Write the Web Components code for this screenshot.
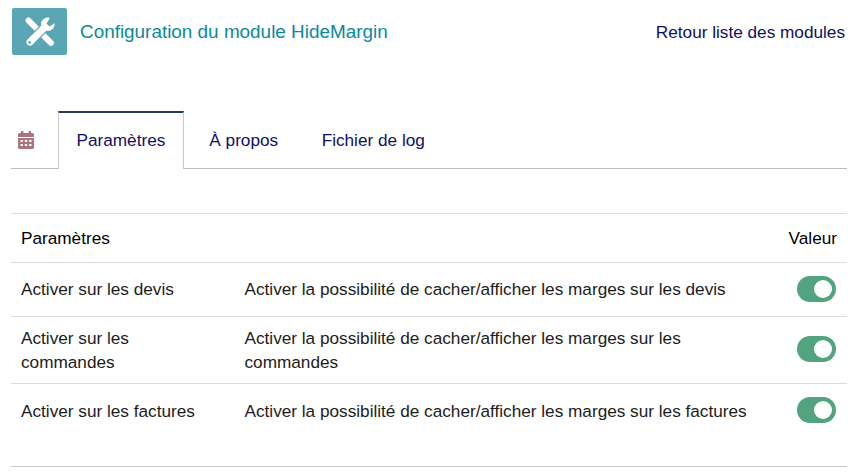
<!DOCTYPE html>
<html lang="fr">
<head>
<meta charset="utf-8">
<title>HideMargin</title>
<style>
  html, body { margin:0; padding:0; background:#fff; }
  body { font-family:"Liberation Sans", Arial, sans-serif; font-size:17.2px; color:#000; }
</style>
</head>
<body>
<module-page>
  <module-header slot="header" title-text="Configuration du module HideMargin" back-text="Retour liste des modules"></module-header>
  <module-tabs slot="tabs">
    <module-tab active>Paramètres</module-tab>
    <module-tab>À propos</module-tab>
    <module-tab>Fichier de log</module-tab>
  </module-tabs>
  <settings-table slot="table">
    <setting-row label="Activer sur les devis">Activer la possibilité de cacher/afficher les marges sur les devis</setting-row>
    <setting-row label="Activer sur les commandes">Activer la possibilité de cacher/afficher les marges sur les commandes</setting-row>
    <setting-row label="Activer sur les factures">Activer la possibilité de cacher/afficher les marges sur les factures</setting-row>
  </settings-table>
</module-page>

<script>
(function () {
  function define(name, css, html, setup) {
    customElements.define(name, class extends HTMLElement {
      constructor() {
        super();
        this.attachShadow({ mode: 'open' });
      }
      connectedCallback() {
        this.shadowRoot.innerHTML = '<style>' + css + '</style>' + html;
        if (setup) setup(this);
      }
    });
  }

  define('module-page', `
    :host { display:block; width:849px; height:474px; box-sizing:border-box; padding:8px 2px 0 11px; overflow:hidden; }
    .bottom { height:1px; background:#c8c8c8; margin-top:29px; }
  `, `
    <slot name="header"></slot>
    <slot name="tabs"></slot>
    <slot name="table"></slot>
    <div class="bottom"></div>
  `);

  define('module-header', `
    :host { display:flex; align-items:flex-start; height:47px; padding-left:1px; }
    .logo { width:55px; height:47px; background:#5aa6b5; border-radius:2px; flex:none; display:flex; align-items:center; justify-content:center; }
    .title { margin-left:13px; margin-top:12px; font-size:18.9px; line-height:23px; color:#0b8a9b; flex:1; }
    .back { margin-top:13px; margin-right:2px; font-size:17.2px; line-height:22px; color:#0f1063; }
  `, `
    <div class="logo">
      <svg width="30" height="30" viewBox="0 0 30 30">
        <line x1="3.5" y1="3.5" x2="26" y2="26" stroke="#fff" stroke-width="6" stroke-linecap="round"/>
        <line x1="5" y1="25" x2="19" y2="11" stroke="#5aa6b5" stroke-width="9.5"/>
        <line x1="5" y1="25" x2="20" y2="10" stroke="#fff" stroke-width="7" stroke-linecap="round"/>
        <circle cx="22.8" cy="7.2" r="6.8" fill="#fff"/>
        <path d="M21.5 6.5 L25.5 0 L31 0 L31 5.5 L24.5 9.5 Z" fill="#5aa6b5"/>
        <circle cx="4.6" cy="25.4" r="1.3" fill="#5aa6b5"/>
      </svg>
    </div>
    <div class="title"></div>
    <div class="back"></div>
  `, (el) => {
    el.shadowRoot.querySelector('.title').textContent = el.getAttribute('title-text');
    el.shadowRoot.querySelector('.back').textContent = el.getAttribute('back-text');
  });

  define('module-tabs', `
    :host { display:flex; align-items:flex-end; margin-top:56px; height:57px; border-bottom:1px solid #bdbdbd; box-sizing:content-box; }
    .cal { width:47px; height:100%; flex:none; display:flex; align-items:center; padding-left:7px; box-sizing:border-box; }
    .tabs { display:flex; height:100%; }
  `, `
    <div class="cal">
      <svg width="16" height="18" viewBox="0 0 16 18">
        <path fill="#a9737f" d="M3 0h2.4v2h5.2V0H13v2h1.4A1.6 1.6 0 0 1 16 3.6V6H0V3.6A1.6 1.6 0 0 1 1.6 2H3z"/>
        <path fill="#a9737f" fill-rule="evenodd" d="M0 7h16v9.4a1.6 1.6 0 0 1-1.6 1.6H1.6A1.6 1.6 0 0 1 0 16.4z M2.5 9v2h2.4V9z M6.8 9v2h2.4V9z M11.1 9v2h2.4V9z M2.5 13v2h2.4v-2z M6.8 13v2h2.4v-2z M11.1 13v2h2.4v-2z"/>
      </svg>
    </div>
    <div class="tabs"><slot></slot></div>
  `);

  define('module-tab', `
    :host { display:block; box-sizing:border-box; height:57px; padding:0 18px 0 17.5px; line-height:54px; font-size:17.2px; color:#0f1063; border:1px solid transparent; border-top-width:2px; margin-right:6px; white-space:nowrap; }
    :host([active]) { padding:0 17.5px; border-color:#c8c8c8; border-top-color:#263c5c; border-bottom:none; margin-right:7px; background:#fff; margin-bottom:-1px; height:58px; }
  `, `<slot></slot>`);

  define('settings-table', `
    :host { display:block; margin-top:44px; border-top:1px solid #dcdcdc; }
    .head { display:flex; justify-content:space-between; align-items:center; height:48px; padding:0 10px; font-size:17.2px; border-bottom:1px solid #dcdcdc; }
  `, `
    <div class="head"><span>Paramètres</span><span>Valeur</span></div>
    <slot></slot>
  `);

  define('setting-row', `
    :host { display:grid; grid-template-columns:223.5px 1fr 60px; align-items:center; min-height:35px; padding:9px 10px; border-bottom:1px solid #dcdcdc; font-size:17.2px; line-height:24px; color:#1c1c1c; }
    :host(:first-child) { padding:8px 10px 10px; }
    :host(:last-child) { border-bottom:none; }
    .label { padding-right:30px; }
    .desc { padding-right:30px; }
    .toggle { justify-self:end; width:39px; height:26px; margin:0 1px 2px 0; border-radius:13px; background:#52a47f; position:relative; }
    :host(:first-child) .toggle { margin-bottom:0; }
    .toggle::after { content:""; position:absolute; right:4px; top:4px; width:18px; height:18px; border-radius:50%; background:#fff; }
  `, `
    <div class="label"></div>
    <div class="desc"><slot></slot></div>
    <div class="toggle"></div>
  `, (el) => {
    el.shadowRoot.querySelector('.label').textContent = el.getAttribute('label');
  });
})();
</script>
</body>
</html>
